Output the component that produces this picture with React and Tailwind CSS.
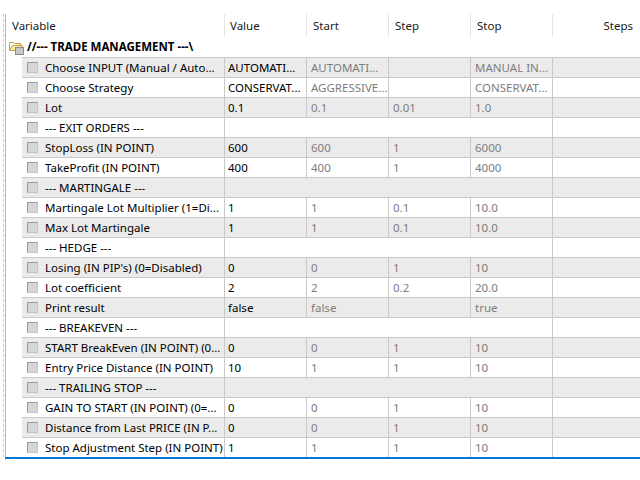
import React from 'react';

const rows = [
  { name: 'Choose INPUT (Manual / Auto...', value: 'AUTOMATI...', start: 'AUTOMATI...', step: '', stop: 'MANUAL IN...' },
  { name: 'Choose Strategy', value: 'CONSERVAT...', start: 'AGGRESSIVE...', step: '', stop: 'CONSERVAT...' },
  { name: 'Lot', value: '0.1', start: '0.1', step: '0.01', stop: '1.0' },
  { name: '--- EXIT ORDERS ---', section: true },
  { name: 'StopLoss (IN POINT)', value: '600', start: '600', step: '1', stop: '6000' },
  { name: 'TakeProfit (IN POINT)', value: '400', start: '400', step: '1', stop: '4000' },
  { name: '--- MARTINGALE ---', section: true },
  { name: 'Martingale Lot Multiplier (1=Di...', value: '1', start: '1', step: '0.1', stop: '10.0' },
  { name: 'Max Lot Martingale', value: '1', start: '1', step: '0.1', stop: '10.0' },
  { name: '--- HEDGE ---', section: true },
  { name: "Losing (IN PIP's) (0=Disabled)", value: '0', start: '0', step: '1', stop: '10' },
  { name: 'Lot coefficient', value: '2', start: '2', step: '0.2', stop: '20.0' },
  { name: 'Print result', value: 'false', start: 'false', step: '', stop: 'true' },
  { name: '--- BREAKEVEN ---', section: true },
  { name: 'START BreakEven (IN POINT) (0...', value: '0', start: '0', step: '1', stop: '10' },
  { name: 'Entry Price Distance (IN POINT)', value: '10', start: '1', step: '1', stop: '10' },
  { name: '--- TRAILING STOP ---', section: true },
  { name: 'GAIN TO START (IN POINT) (0=...', value: '0', start: '0', step: '1', stop: '10' },
  { name: 'Distance from Last PRICE (IN P...', value: '0', start: '0', step: '1', stop: '10' },
  { name: 'Stop Adjustment Step (IN POINT)', value: '1', start: '1', step: '1', stop: '10' },
];

const FolderIcon = () => (
  <svg width="16" height="15" viewBox="0 0 16 15">
    <path d="M0.5 2.5 h4 l1 1 h6 v2" fill="#f3dc8a" stroke="#c9a448" />
    <path d="M0.5 2.5 v8 h10 l3 -5 h-10 l-3 5" fill="#f7e7a6" stroke="#c9a448" />
    <rect x="6.5" y="7.5" width="8" height="7" fill="#c8c8c8" stroke="#8c8c8c" />
  </svg>
);

const Checkbox = () => (
  <div className="w-[11px] h-[11px] shrink-0 bg-[#d6d6d6] border border-[#c4c4c4] border-t-[#9a9a9a] border-l-[#9a9a9a]" />
);

const HeaderCell = ({ children, className = '' }) => (
  <div className={`h-full flex items-center border-r border-[#e5e5e5] ${className}`}>{children}</div>
);

const Row = ({ row, shaded }) => (
  <div className="flex h-[20px] pl-[16px]">
    <div className={`flex flex-1 border-t border-[#c9c9c9] ${shaded ? 'bg-[#ebebeb]' : 'bg-white'}`}>
      <div className="w-[203px] shrink-0 flex items-center border-r border-[#c9c9c9] pl-[5px] overflow-hidden whitespace-nowrap">
        <Checkbox />
        <span className="ml-[7px] text-black">{row.name}</span>
      </div>
      {row.section ? (
        <div className="w-[328px] shrink-0 border-r border-[#c9c9c9]" />
      ) : (
        <>
          <div className="w-[82px] shrink-0 flex items-center border-r border-[#c9c9c9] pl-[3px] text-black whitespace-nowrap overflow-hidden">{row.value}</div>
          <div className="w-[82px] shrink-0 flex items-center border-r border-[#c9c9c9] pl-[4px] text-[#7d7d7d] whitespace-nowrap overflow-hidden">{row.start}</div>
          <div className="w-[82px] shrink-0 flex items-center border-r border-[#c9c9c9] pl-[4px] text-[#7d7d7d] whitespace-nowrap overflow-hidden">{row.step}</div>
          <div className="w-[82px] shrink-0 flex items-center border-r border-[#c9c9c9] pl-[4px] text-[#7d7d7d] whitespace-nowrap overflow-hidden">{row.stop}</div>
        </>
      )}
      <div className="flex-1" />
    </div>
  </div>
);

export default function App() {
  return (
    <div
      className="w-[640px] h-[480px] bg-white overflow-hidden text-[11.5px] leading-none"
      style={{ fontFamily: '"Noto Sans", "Open Sans", sans-serif' }}
    >
      <div className="mt-[14px] ml-[3px] border-l border-dashed border-[#b6cfe8]">
        <div className="ml-[1px] border-l border-[#b4b4b4]">
          {/* header */}
          <div className="flex h-[23px] text-[#1a1a1a]">
            <HeaderCell className="w-[219px] shrink-0 pl-[6px]">Variable</HeaderCell>
            <HeaderCell className="w-[82px] shrink-0 pl-[5px]">Value</HeaderCell>
            <HeaderCell className="w-[82px] shrink-0 pl-[6px]">Start</HeaderCell>
            <HeaderCell className="w-[82px] shrink-0 pl-[6px]">Step</HeaderCell>
            <HeaderCell className="w-[82px] shrink-0 pl-[6px]">Stop</HeaderCell>
            <div className="flex-1 flex items-center justify-end pr-[7px]">Steps</div>
          </div>
          {/* group */}
          <div className="flex h-[20px] items-center pl-[3px]">
            <FolderIcon />
            <span className="ml-[2px] font-bold text-black">//--- TRADE MANAGEMENT ---\</span>
          </div>
          {rows.map((row, i) => (
            <Row key={i} row={row} shaded={i % 2 === 0} />
          ))}
        </div>
      </div>
      <div className="ml-[5px] h-[2px] bg-[#0078d7]" />
    </div>
  );
}
